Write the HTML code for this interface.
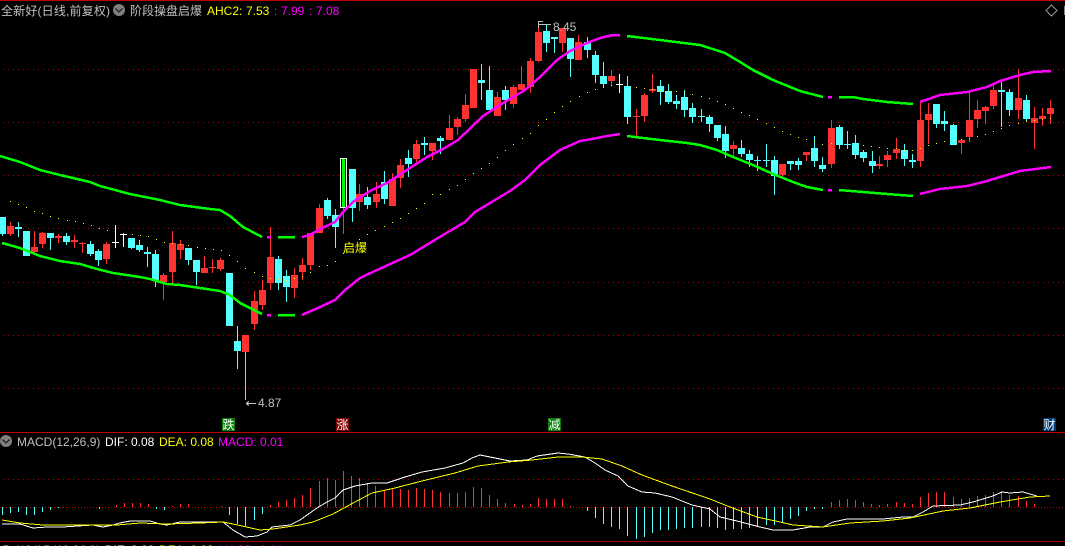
<!DOCTYPE html>
<html><head><meta charset="utf-8"><style>
html,body{margin:0;padding:0;background:#000;width:1065px;height:546px;overflow:hidden}
svg{position:absolute;left:0;top:0;display:block}
text{font-family:"Liberation Sans","WenQuanYi Zen Hei","Noto Sans CJK SC",sans-serif;font-size:12px}
</style></head><body>
<svg width="1065" height="546" viewBox="0 0 1065 546" shape-rendering="crispEdges">
<rect width="1065" height="546" fill="#000"/>
<rect x="0" y="0" width="1065" height="1" fill="#c00000"/>
<rect x="0" y="432" width="1065" height="1" fill="#c00000"/>
<rect x="0" y="541" width="1065" height="1" fill="#a00000"/>
<g stroke="#b00000" stroke-dasharray="1 4" fill="none" transform="translate(0 .5)">
<path d="M3 69H1065M3 122H1065M3 175H1065M3 228H1065M3 282H1065M3 335H1065M3 388H1065M3 479H1065"/>
</g>
<path d="M0 507.5H1065" stroke="#c00000" stroke-dasharray="1 2" fill="none"/>

<g transform="translate(.5 0)" fill="none">
<path stroke="#54ffff" d="M2 217V236M18 222V237M50 233V250M66 233V245M90 241V256M98 249V266M131 238V249M139 240V252M147 247V267M155 250V287M188 248V265M196 260V285M237 326V369M278 256V290M286 270V302M327 198V219M335 209V248M352 169V222M367 187V209M384 171V204M408 150V177M424 137V155M440 136V154M481 64V100M489 66V110M505 86V110M546 25V52M554 37V53M570 38V77M587 37V58M595 51V83M603 62V87M627 76V124M660 80V105M668 84V104M676 95V109M684 90V117M692 103V123M701 109V122M709 115V132M717 125V141M725 126V158M741 140V157M749 150V167M757 156V171M766 144V167M774 156V195M790 161V170M798 158V170M814 136V167M822 157V172M839 125V149M847 131V149M855 135V159M863 150V162M872 151V173M904 144V166M912 154V168M936 104V128M944 111V131M953 124V145M1001 82V127M1009 89V116M1026 95V122"/>
<path stroke="#54ffff" stroke-width="7" d="M2 217V234M18 227V229M26 231V256M50 233V238M66 236V242M90 244V254M98 251V260M131 238V248M139 245V250M147 252V254M155 254V281M188 248V260M196 260V272M229 273V326M237 341V351M278 259V283M286 276V287M327 200V216M335 215V227M352 169V208M367 197V205M384 182V199M408 158V164M424 143V145M440 138V141M481 80V83M489 90V110M505 90V100M546 31V43M554 37V39M570 38V59M587 42V50M595 55V75M603 76V84M627 86V117M660 86V92M668 91V102M676 101V104M684 97V110M692 108V117M701 116V117M709 117V124M717 125V138M725 134V151M741 148V154M749 154V160M757 160V161M766 160V161M774 160V176M790 161V164M798 161V165M814 148V161M822 165V169M839 127V145M847 144V145M855 143V155M863 152V158M872 161V166M904 150V159M912 160V162M936 104V124M944 121V124M953 125V145M1001 90V92M1009 92V110M1026 100V119"/>
<path stroke="#ff3232" d="M10 222V236M34 231V255M42 232V248M58 234V243M74 235V248M82 242V253M106 242V264M163 273V300M172 231V283M180 240V259M204 256V273M212 259V273M220 258V271M254 291V330M262 280V310M270 227V290M294 268V298M302 258V280M310 233V270M319 204V233M343 208V234M359 184V211M376 182V208M392 173V206M400 159V188M416 140V162M432 143V160M449 115V140M457 117V135M465 94V122M473 69V108M497 92V116M513 85V108M521 66V90M530 58V93M538 24V62M562 28V52M578 35V60M611 70V86M636 109V137M644 93V122M652 74V93M733 141V156M782 164V177M806 152V161M831 120V168M879 156V169M887 151V167M896 138V159M920 102V167M928 103V144M961 140V154M969 92V142M977 100V128M985 106V124M993 85V109M1018 69V119M1034 107V149M1042 108V126M1050 100V124"/>
<path stroke="#ff3232" stroke-width="7" d="M10 226V234M34 247V252M42 233V244M58 236V238M74 240V242M82 243V244M106 244V259M163 275V282M172 243V272M180 244V250M204 268V273M212 267V268M220 260V269M245 335V352M254 301V324M262 290V305M270 257V283M294 275V288M302 265V272M310 233V265M319 208V233M359 194V202M376 194V202M392 179V206M400 165V178M416 144V159M432 143V151M449 128V140M457 119V127M465 105V119M473 69V108M497 97V116M513 87V104M521 84V90M530 61V87M538 32V61M562 28V43M578 42V60M611 76V81M636 116V117M644 95V116M652 89V91M733 145V149M782 164V175M806 152V155M831 128V164M879 164V166M887 155V160M896 149V153M920 120V161M928 114V120M961 140V143M969 120V137M977 110V119M985 107V111M993 90V106M1018 98V110M1034 118V123M1042 116V119M1050 108V114"/>
<path stroke="#fff" d="M115 225V248M123 233V247M619 74V93"/>
<path stroke="#fff" stroke-width="7" d="M115 242V243M123 234V235M619 84V85"/>
<path stroke="#c0c0c0" d="M245 352V400"/>
</g>
<rect x="340.5" y="158.5" width="6" height="49" fill="none" stroke="#fff"/>
<rect x="342" y="159" width="3" height="48" fill="#00ff00"/>

<g fill="none" stroke-width="2.5">
<path stroke="#00ff00" d="M0 156L20 162L40 170L60 175L90 182L100 186L130 194L160 200L180 205L210 209L220 210L230 216L243 227L262 237"/>
<path stroke="#ff00ff" d="M267 237H271"/>
<path stroke="#00ff00" d="M278 237H295"/>
<path stroke="#ff00ff" d="M302 237L310 235L318 230L335 222L343 212L353 202L370 191L387 183L410 168L427 157L443 149L458 140L483 116L500 105L525 90L540 77L557 60L570 51L587 43L600 38L613 35L620 35"/>
<path stroke="#00ff00" d="M627 36L660 40L700 45L725 53L740 62L753 70L773 80L800 91L823 97"/>
<path stroke="#ff00ff" d="M828 97H832"/>
<path stroke="#00ff00" d="M839 97H853L863 99L887 102L913 104"/>
<path stroke="#ff00ff" d="M920 102L940 95L967 92L987 87L1000 81L1020 75L1033 72L1051 71"/>
<path stroke="#00ff00" d="M2 243L20 248L40 256L60 261L80 264L97 269L113 273L140 277L150 279L160 282L167 284L180 285L200 288L220 291L230 295L240 303L262 314"/>
<path stroke="#ff00ff" d="M267 315H271"/>
<path stroke="#00ff00" d="M278 315H295"/>
<path stroke="#ff00ff" d="M302 315L320 307L335 300L345 290L360 278L377 270L410 255L443 235L465 222L475 212L490 203L510 191L525 180L540 165L560 150L580 141L592 139L607 136L620 134"/>
<path stroke="#00ff00" d="M627 136L643 138L660 140L687 143L700 145L717 150L733 157L753 165L773 174L793 182L807 187L823 190"/>
<path stroke="#ff00ff" d="M828 190H832"/>
<path stroke="#00ff00" d="M839 190L863 192L887 194L913 196"/>
<path stroke="#ff00ff" d="M920 194L940 189L967 186L987 181L1000 177L1020 171L1051 167"/>
</g>

<path transform="translate(0 .5)" fill="none" stroke="#ffff00" d="M10 201h1M18 204h1M26 207h1M34 211h1M42 213h1M50 216h1M58 218h1M67 220h1M75 221h1M83 223h1M91 225h1M99 228h1M107 230h1M115 232h1M123 233h1M132 234h1M140 235h1M148 236h1M156 239h1M164 242h1M172 243h1M180 244h1M188 245h1M197 247h1M205 248h1M213 249h1M221 250h1M229 255h1M237 261h1M245 268h1M254 272h1M262 276h1M270 278h1M278 279h1M286 280h1M294 278h1M302 276h1M310 272h1M319 266h1M327 265h1M335 261h1M343 253h1M351 246h1M359 239h1M367 234h1M375 230h1M384 226h1M392 222h1M400 218h1M408 213h1M416 208h1M424 203h1M432 194h1M440 194h1M449 189h1M457 185h1M465 179h1M473 173h1M481 168h1M489 163h1M497 157h1M505 150h1M513 144h1M522 138h1M530 133h1M538 125h1M546 119h1M554 112h1M562 106h1M570 101h1M579 96h1M587 92h1M595 89h1M603 87h1M611 85h1M619 85h1M627 86h1M636 87h1M644 88h1M652 89h1M660 90h1M668 91h1M676 91h1M684 92h1M692 94h1M701 96h1M709 98h1M717 101h1M725 104h1M733 108h1M741 112h1M749 115h1M757 119h1M766 123h1M774 127h1M782 131h1M790 134h1M798 137h1M806 139h1M814 141h1M822 144h1M831 143h1M839 144h1M847 145h1M855 144h1M863 145h1M871 146h1M879 147h1M887 148h1M896 148h1M904 150h1M912 150h1M920 148h1M928 145h1M936 143h1M944 141h1M953 140h1M961 139h1M969 138h1M977 136h1M985 134h1M993 131h1M1001 128h1M1009 125h1M1018 123h1M1026 121h1M1034 120h1M1042 119h1M1050 118h1"/>

<g transform="translate(.5 0)" fill="none">
<path stroke="#54ffff" d="M2 507V515M10 507V513M18 507V512M26 507V515M34 507V515M42 507V512M50 507V510M58 507V508M99 507V509M156 507V509M164 507V510M229 507V515M237 507V524M245 507V526M254 507V520M262 507V514M587 507V511M595 507V518M603 507V524M611 507V527M619 507V529M627 507V536M636 507V539M644 507V537M652 507V533M660 507V530M668 507V530M676 507V529M684 507V528M692 507V528M701 507V527M709 507V527M717 507V528M725 507V530M733 507V529M741 507V529M749 507V528M757 507V527M766 507V525M774 507V525M782 507V522M790 507V519M798 507V516M806 507V511M814 507V509M822 507V509"/>
<path stroke="#ff3232" d="M116 505V507M124 503V507M132 503V507M140 503V507M148 504V507M172 506V507M180 504V507M188 504V507M221 506V507M270 505V507M278 502V507M286 500V507M294 498V507M302 495V507M310 488V507M319 481V507M327 478V507M335 480V507M343 471V507M351 476V507M359 478V507M367 483V507M375 486V507M384 490V507M392 489V507M400 489V507M408 490V507M416 488V507M424 489V507M432 490V507M440 492V507M449 493V507M457 493V507M465 492V507M473 487V507M481 488V507M489 495V507M497 499V507M505 503V507M514 504V507M522 505V507M530 504V507M538 498V507M546 499V507M554 499V507M562 499V507M570 506V507M831 502V507M839 500V507M847 499V507M855 500V507M863 502V507M871 504V507M879 505V507M887 504V507M896 502V507M904 503V507M912 504V507M920 497V507M928 493V507M936 492V507M944 492V507M953 497V507M961 499V507M969 498V507M977 496V507M985 495V507M993 492V507M1001 491V507M1009 495V507M1018 496V507M1026 501V507M1034 504V507"/>
</g>
<path fill="none" stroke="#fff" d="M2 524L20 524L33 528L47 527L63 527L93 525L103 527L113 525L120 523L130 521L150 521L160 524L167 525L180 522L193 522L217 522L223 522L233 530L245 537L257 536L267 532L272 527L290 525L300 520L317 508L327 502L335 498L343 490L355 486L372 483L387 483L405 477L422 472L445 468L463 463L472 458L480 455L495 458L510 461L527 460L537 456L558 453L568 454L585 457L595 463L605 470L618 476L628 486L642 492L655 493L672 497L692 505L710 509L720 517L737 521L760 527L773 530L793 530L810 527L823 527L833 522L847 519L883 519L903 517L913 517L923 512L933 506L960 505L973 502L993 496L1002 492L1010 493L1023 492L1037 496"/>
<path fill="none" stroke="#ffff00" d="M2 520L20 523L43 525L100 525L117 525L140 523L167 524L200 523L223 522L233 524L260 530L273 529L300 525L313 522L333 514L355 502L372 493L395 488L422 481L455 473L478 466L508 462L532 460L558 457L582 457L602 459L622 466L642 475L672 486L710 499L730 507L757 517L780 522L793 525L823 527L850 523L883 521L910 518L943 511L970 508L1000 502L1030 497L1050 496"/>

<g fill="#c0c0c0">
<path fill="none" stroke="#c0c0c0" d="M538.5 21V28M539 21.5h4M539 24.5H551M246 403.5H256M246 403.5l3-2M246 403.5l3 2"/>
<text x="553" y="31">8.45</text>
<text x="258" y="407">4.87</text>
</g>
<text x="343" y="252" fill="#ffff00">启爆</text>

<g shape-rendering="auto">
<text x="1" y="15" fill="#c0c0c0" textLength="109">全新好(日线,前复权)</text>
<circle cx="119" cy="10" r="6" fill="#808080"/>
<path d="M115.5 8.5L119 12L122.500 8.5" fill="none" stroke="#222" stroke-width="1.300"/>
<text x="130" y="15" fill="#c0c0c0">阶段操盘启爆</text>
<text x="207" y="15" fill="#ffff00">AHC2:</text>
<text x="246" y="15" fill="#ffff00">7.53</text>
<text x="274" y="15" fill="#ff00ff">:</text>
<text x="281" y="15" fill="#ff00ff">7.99</text>
<text x="309" y="15" fill="#ff00ff">:</text>
<text x="316" y="15" fill="#ff00ff">7.08</text>
<path d="M1051.500 5L1057 10.500L1051.500 16L1046 10.500Z" fill="none" stroke="#999"/>

<circle cx="6" cy="441" r="6" fill="#808080"/>
<path d="M2.500 439.500L6 443L9.500 439.500" fill="none" stroke="#222" stroke-width="1.300"/>
<text x="17" y="446" fill="#c0c0c0">MACD(12,26,9)</text>
<text x="105" y="446" fill="#fff">DIF: 0.08</text>
<text x="159" y="446" fill="#ffff00">DEA: 0.08</text>
<text x="218" y="446" fill="#ff00ff">MACD: 0.01</text>

<circle cx="6" cy="551" r="6" fill="#808080"/>
<text x="17" y="554" fill="#c0c0c0">WVAD(12,26,9)</text>
<text x="105" y="554" fill="#fff">DIF: 0.08</text>
<text x="159" y="554" fill="#ffff00">DEA: 0.08</text>
<text x="218" y="554" fill="#ff00ff">MACD: 0.01</text>

<rect x="222" y="418" width="13" height="13" fill="#0a800a"/>
<text x="222.500" y="429" fill="#fff">跌</text>
<rect x="336" y="418" width="13" height="13" fill="#800000"/>
<text x="336.500" y="429" fill="#fff">涨</text>
<rect x="548" y="418" width="13" height="13" fill="#0a800a"/>
<text x="548.500" y="429" fill="#fff">减</text>
<rect x="1043" y="418" width="13" height="13" fill="#003a70"/>
<text x="1043.500" y="429" fill="#fff">财</text>
</g>
<rect x="1064" y="6" width="1" height="9" fill="#888"/>
</svg>
</body></html>
